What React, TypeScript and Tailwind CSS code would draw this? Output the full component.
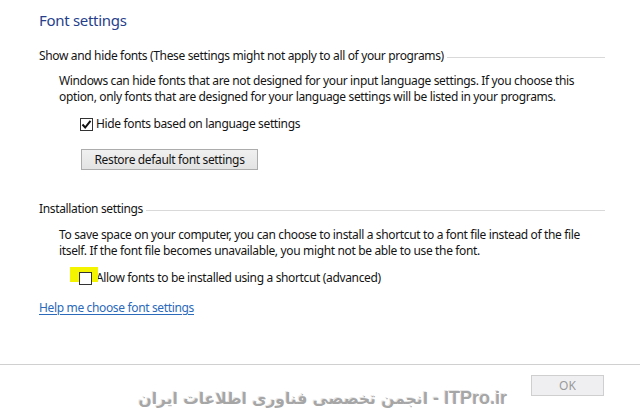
const CheckBox = ({ checked }: { checked?: boolean }) => (
  <span className="w-[13px] h-[13px] border border-[#333333] bg-white flex items-center justify-center shrink-0">
    {checked && (
      <svg width="11" height="11" viewBox="0 0 11 11">
        <path d="M1.5 5.5 L4.2 8.5 L9.5 1.8" fill="none" stroke="#111" strokeWidth="2" />
      </svg>
    )}
  </span>
);

const SectionHeader = ({ title }: { title: string }) => (
  <div className="flex items-center gap-[3px] leading-[16px]">
    <span className="whitespace-nowrap">{title}</span>
    <div className="flex-1 h-px bg-[#d9d9d9] mt-[2px]" />
  </div>
);

export default function App() {
  return (
    <div className="relative w-[640px] h-[420px] bg-white flex flex-col font-['Noto_Sans',sans-serif] text-[12px] tracking-[-0.35px] text-[#141414]">
      <div className="flex-1 pl-[39px] pr-[35px] pt-[9px]">
        <h1 className="text-[15px] leading-[22px] tracking-[-0.3px] text-[#263f8c]">Font settings</h1>

        <div className="mt-[17px]">
          <SectionHeader title="Show and hide fonts (These settings might not apply to all of your programs)" />
        </div>
        <p className="mt-[9px] ml-[20px] leading-[16px] whitespace-nowrap">
          Windows can hide fonts that are not designed for your input language settings. If you choose this
          <br />
          option, only fonts that are designed for your language settings will be listed in your programs.
        </p>
        <label className="mt-[11px] ml-[41px] flex items-center gap-[3px] leading-[16px]">
          <CheckBox checked />
          <span>Hide fonts based on language settings</span>
        </label>
        <button className="mt-[17px] ml-[42px] w-[177px] h-[21px] border border-[#acacac] bg-gradient-to-b from-[#f0f0f0] to-[#e3e3e3] leading-[19px]">
          Restore default font settings
        </button>

        <div className="mt-[31px]">
          <SectionHeader title="Installation settings" />
        </div>
        <p className="mt-[10px] ml-[20px] leading-[16px] whitespace-nowrap">
          To save space on your computer, you can choose to install a shortcut to a font file instead of the file
          <br />
          itself. If the font file becomes unavailable, you might not be able to use the font.
        </p>
        <label className="mt-[11px] ml-[40px] flex items-center gap-[4px] leading-[16px]">
          <span className="relative">
            <span className="absolute -left-[9px] -top-[5px] w-[28px] h-[15px] bg-[#f4f400]" />
            <span className="relative block">
              <CheckBox />
            </span>
          </span>
          <span>Allow fonts to be installed using a shortcut (advanced)</span>
        </label>

        <a href="#" className="mt-[14px] block w-fit leading-[16px] text-[#2b69ba] underline underline-offset-2">
          Help me choose font settings
        </a>
      </div>

      <footer className="h-[56px] border-t border-[#d0d0d0] flex justify-end pt-[10px] pr-[36px]">
        <button className="w-[73px] h-[21px] border border-[#cfcfcf] bg-[#efeff1] text-[#9a9a9a] leading-[19px] tracking-normal">
          OK
        </button>
      </footer>

      <div
        dir="rtl"
        className="absolute left-[133px] top-[388px] w-[374px] whitespace-nowrap font-['Liberation_Sans','DejaVu_Sans',sans-serif] font-bold text-[18px] leading-[20px] tracking-normal text-[#a6a6a6] [text-shadow:1px_1px_0_#ffffff,-1px_-1px_0_#e6e6e6]"
      >
        ITPro.ir -{" "}
        <span className="font-['DejaVu_Sans',sans-serif] text-[15.5px]">انجمن تخصصی فناوری اطلاعات ایران</span>
      </div>
    </div>
  );
}
